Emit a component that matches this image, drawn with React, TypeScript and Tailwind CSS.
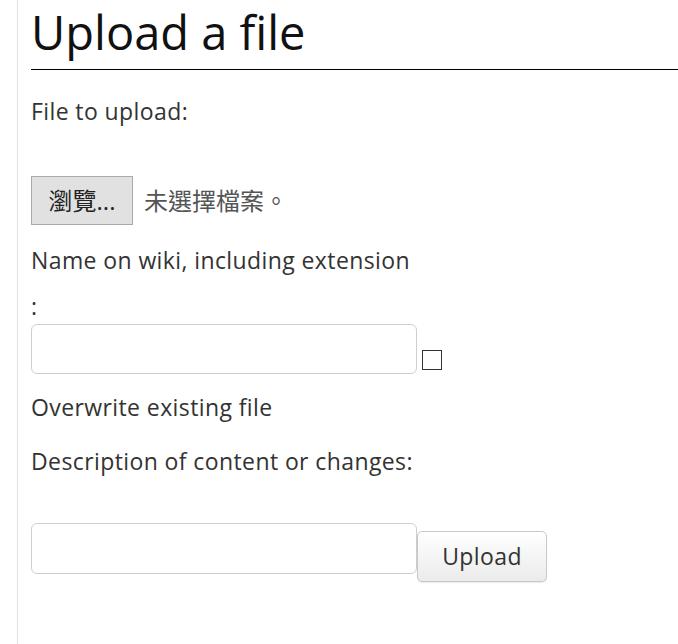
import React from 'react';

const bodyFont = '"Open Sans", "Noto Sans CJK TC", sans-serif';

const App: React.FC = () => {
  return (
    <div className="min-h-screen bg-white" style={{ fontFamily: bodyFont }}>
      <div className="ml-[17px] min-h-[644px] border-l border-[#e2e2e2] pl-[13px] text-[23px] tracking-[0.4px] text-[#333]">
        {/* Title */}
        <h1 className="h-[70px] border-b border-black text-[47px] leading-[64px] font-normal tracking-normal text-[#111]">
          Upload a file
        </h1>

        <form className="flex flex-col" onSubmit={(e) => e.preventDefault()}>
          <p className="mt-[26px] leading-[30px]">File to upload:</p>

          {/* File picker */}
          <div className="mt-[50px] flex h-[49px] items-center">
            <button
              type="button"
              className="h-[49px] w-[102px] border border-[#a9a9a9] bg-[#e1e1e1] text-[24px] tracking-normal text-[#222]"
            >
              瀏覽...
            </button>
            <span className="ml-[11px] text-[24px] tracking-normal text-[#555]">未選擇檔案。</span>
          </div>

          <p className="mt-[20px] leading-[30px]">Name on wiki, including extension</p>
          <p className="mt-[16px] leading-[30px]">:</p>

          {/* Destination name + overwrite */}
          <div className="mt-[3px] flex items-end">
            <input
              type="text"
              className="h-[50px] w-[386px] rounded-[6px] border border-[#cfcfcf] bg-white px-2 outline-none"
            />
            <span className="mb-[4px] ml-[5px] block h-[20px] w-[20px] border border-[#333] bg-white" />
          </div>

          <p className="mt-[18px] leading-[30px]">Overwrite existing file</p>
          <p className="mt-[24px] leading-[30px]">Description of content or changes:</p>

          {/* Description + submit */}
          <div className="mt-[47px] flex items-start">
            <input
              type="text"
              className="h-[51px] w-[386px] rounded-[6px] border border-[#cfcfcf] bg-white px-2 outline-none"
            />
            <button
              type="submit"
              className="mt-[8px] h-[51px] w-[130px] rounded-[5px] border border-[#c8c8c8] bg-gradient-to-b from-white to-[#ebebeb] text-[23px] text-[#333] shadow-[0_1px_1px_rgba(0,0,0,0.08)]"
            >
              Upload
            </button>
          </div>
        </form>
      </div>
    </div>
  );
};

export default App;
